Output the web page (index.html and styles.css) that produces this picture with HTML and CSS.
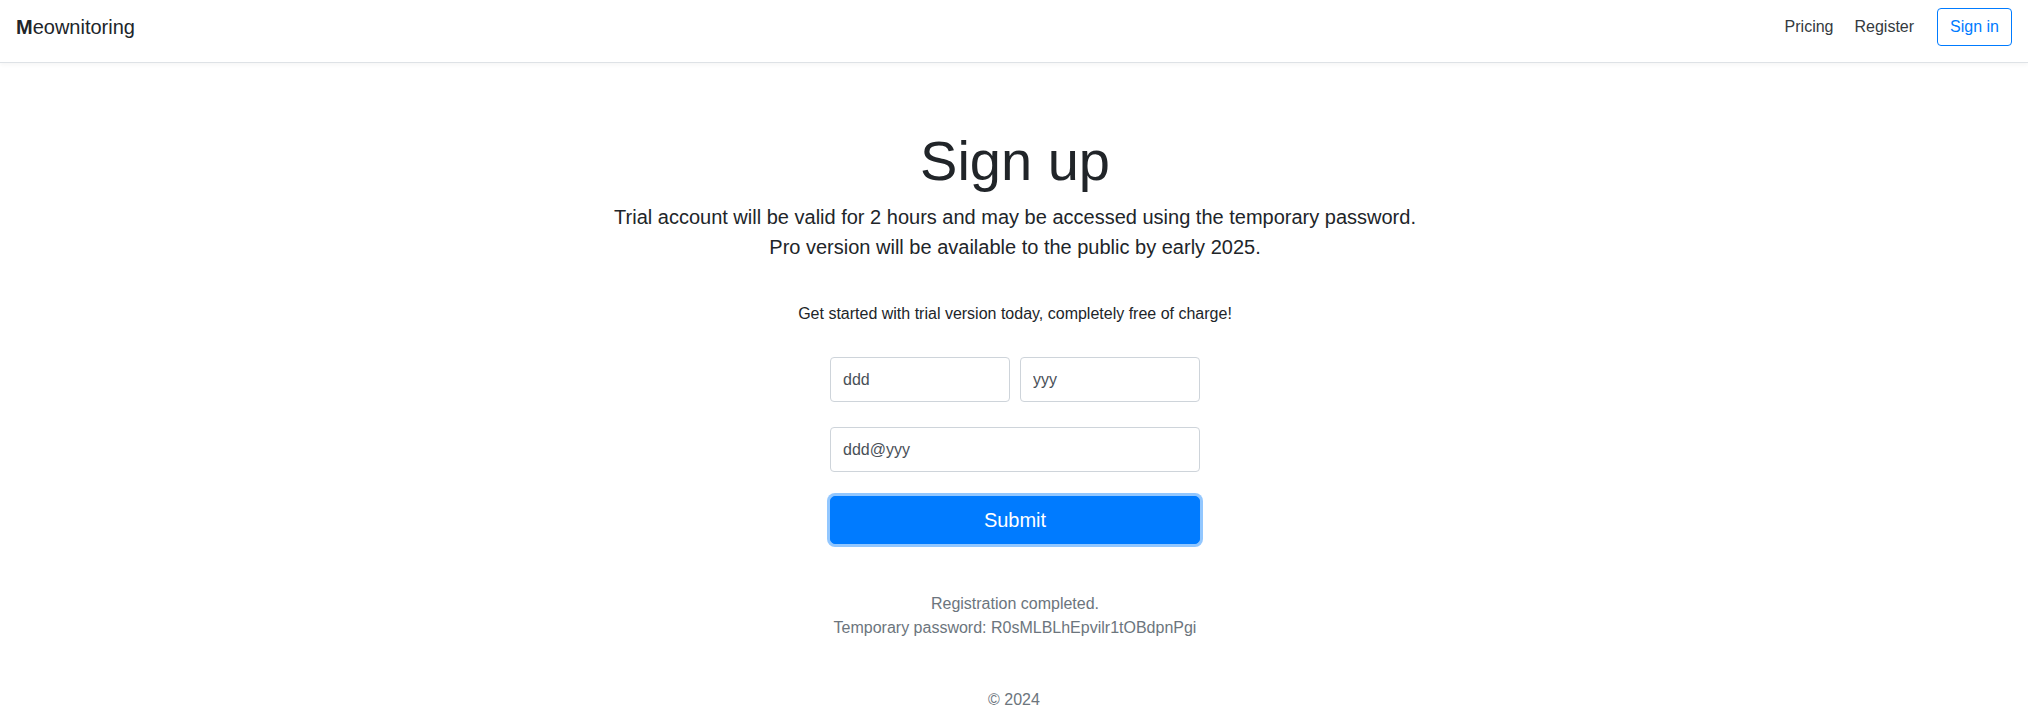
FILE: index.html
```html
<!DOCTYPE html>
<html lang="en">
<head>
<meta charset="utf-8">
<title>Meownitoring - Sign up</title>
<link rel="stylesheet" href="styles.css">
</head>
<body>
<header class="site-header">
  <h5 class="brand"><b>M</b>eownitoring</h5>
  <nav class="nav">
    <a class="nav-link" href="#">Pricing</a>
    <a class="nav-link" href="#">Register</a>
  </nav>
  <a class="btn-signin" href="#">Sign in</a>
</header>
<main class="main">
  <section class="intro">
    <h1 class="title">Sign up</h1>
    <p class="lead">Trial account will be valid for 2 hours and may be accessed using the temporary password.<br>Pro version will be available to the public by early 2025.</p>
  </section>
  <p class="tagline">Get started with trial version today, completely free of charge!</p>
  <form class="signup">
    <div class="name-row">
      <input class="field" type="text" value="ddd">
      <input class="field" type="text" value="yyy">
    </div>
    <input class="field field-email" type="email" value="ddd@yyy">
    <button class="btn-submit" type="button">Submit</button>
  </form>
  <div class="result">Registration completed.<br>Temporary password: R0sMLBLhEpvilr1tOBdpnPgi</div>
</main>
<footer class="footer">© 2024</footer>
</body>
</html>
```
FILE: styles.css
```css
* { box-sizing: border-box; }
html, body { margin: 0; }
body {
  font-family: "Liberation Sans", Arial, Helvetica, sans-serif;
  font-size: 16px;
  line-height: 1.5;
  color: #212529;
  background: #fff;
}
.site-header {
  display: flex;
  align-items: center;
  height: 63px;
  padding: 8px 16px 16px 16px;
  border-bottom: 1px solid #dee2e6;
  box-shadow: 0 2px 4px rgba(0,0,0,.04);
}
.brand {
  margin: 0 auto 0 0;
  font-size: 20px;
  font-weight: 400;
  line-height: 1.2;
  color: #212529;
}
.brand b { font-weight: 700; }
.nav {
  display: flex;
  gap: 5px;
  margin-right: 15px;
}
.nav-link {
  padding: 7px 8px;
  color: #343a40;
  text-decoration: none;
}
.btn-signin {
  display: inline-block;
  padding: 6px 12px;
  border: 1px solid #007bff;
  border-radius: 4px;
  color: #007bff;
  text-decoration: none;
  line-height: 24px;
}
.main {
  display: flex;
  flex-direction: column;
  align-items: center;
  text-align: center;
  padding-left: 2px;
}
.intro {
  margin-top: 16px;
  padding: 48px 16px 24px;
}
.title {
  margin: 0 0 8px;
  font-size: 56px;
  font-weight: 300;
  line-height: 1.2;
}
.lead {
  margin: 0 0 16px;
  font-size: 20px;
  font-weight: 300;
  line-height: 30px;
}
.tagline {
  margin: 0 0 31px;
  font-size: 16px;
}
.signup {
  width: 370px;
  display: flex;
  flex-direction: column;
}
.name-row {
  display: flex;
  gap: 10px;
  margin-bottom: 25px;
}
.field {
  width: 100%;
  height: 45px;
  padding: 6px 12px;
  font-family: inherit;
  font-size: 16px;
  color: #495057;
  background: #fff;
  border: 1px solid #ced4da;
  border-radius: 4px;
}
.name-row .field { width: 180px; }
.field-email { margin-bottom: 24px; }
.btn-submit {
  height: 48px;
  padding: 8px 16px;
  font-family: inherit;
  font-size: 20px;
  line-height: 30px;
  color: #fff;
  background: #007bff;
  border: 1px solid #007bff;
  border-radius: 5px;
  box-shadow: 0 0 0 3px rgba(38,143,255,.5);
}
.result {
  margin-top: 48px;
  color: #6c757d;
}
.footer {
  margin-top: 48px;
  text-align: center;
  color: #6c757d;
}
```
